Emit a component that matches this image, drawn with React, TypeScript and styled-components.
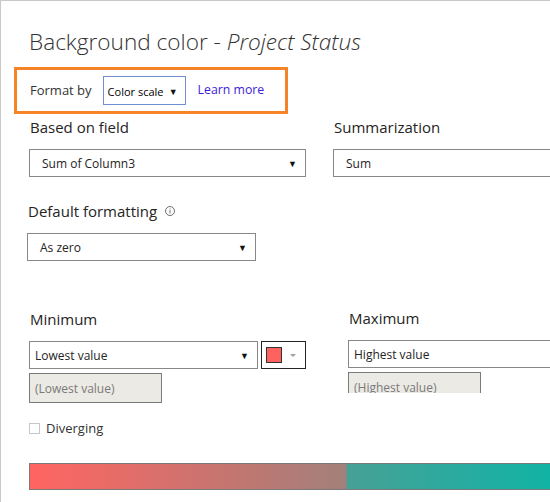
import React from 'react';
import styled, { createGlobalStyle } from 'styled-components';

const GlobalStyle = createGlobalStyle`
  body {
    margin: 0;
    background: #ffffff;
    font-family: "Open Sans", "Noto Sans", sans-serif;
  }
`;

type SelectProps = {
  $width: number;
  $tight?: boolean;
};

function App() {
  return (
    <>
      <GlobalStyle />
      <Page>
        <Title>
          Background color - <em>Project Status</em>
        </Title>
        <FormatBox>
          <FormatLabel>Format by</FormatLabel>
          <SmallSelect>
            <span>Color scale</span>
            <Arrow>▼</Arrow>
          </SmallSelect>
          <LearnLink href="#">Learn more</LearnLink>
        </FormatBox>

        <FieldRow>
          <Field>
            <Label>Based on field</Label>
            <Select $width={277}>
              <span>Sum of Column3</span>
              <Arrow>▼</Arrow>
            </Select>
          </Field>
          <Field>
            <Label>Summarization</Label>
            <Select $width={300}>
              <span>Sum</span>
            </Select>
          </Field>
        </FieldRow>

        <DefaultField>
          <Label>
            Default formatting
            <InfoIcon viewBox="0 0 10 10">
              <circle cx="5" cy="5" r="4.5" fill="none" stroke="#605e5c" strokeWidth="0.9" />
              <rect x="4.55" y="4.2" width="0.9" height="3.3" fill="#605e5c" />
              <rect x="4.55" y="2.5" width="0.9" height="0.9" fill="#605e5c" />
            </InfoIcon>
          </Label>
          <Select $width={229}>
            <span>As zero</span>
            <Arrow>▼</Arrow>
          </Select>
        </DefaultField>

        <RangeRow>
          <Field>
            <Label>Minimum</Label>
            <PickerRow>
              <Select $width={229} $tight>
                <span>Lowest value</span>
                <Arrow>▼</Arrow>
              </Select>
              <ColorButton>
                <Swatch />
                <SmallCaret />
              </ColorButton>
            </PickerRow>
            <ValueBox>(Lowest value)</ValueBox>
          </Field>
          <ClippedField>
            <Label>Maximum</Label>
            <Select $width={220} $tight>
              <span>Highest value</span>
            </Select>
            <ValueBox>(Highest value)</ValueBox>
          </ClippedField>
        </RangeRow>

        <CheckRow>
          <CheckBox />
          <span>Diverging</span>
        </CheckRow>

        <ScaleBar />
      </Page>
    </>
  );
}

export default App;

const Page = styled.div`
  width: 550px;
  height: 502px;
  box-sizing: border-box;
  border-top: 1px solid #c8c8c8;
  border-left: 1px solid #c8c8c8;
  padding: 25px 0 0 28px;
  overflow: hidden;
  color: #252423;
`;
const Title = styled.h1`
  margin: 0;
  font-size: 22.6px;
  line-height: 32px;
  font-weight: 300;
  color: #333333;
  white-space: nowrap;
  > em {
    font-style: italic;
  }
`;
const FormatBox = styled.div`
  margin: 9px 0 0 -15px;
  width: 274px;
  height: 47px;
  box-sizing: border-box;
  border: 3px solid #f68326;
  display: flex;
  align-items: center;
  padding-left: 13px;
`;
const FormatLabel = styled.span`
  font-size: 13px;
  color: #333333;
  margin-bottom: 2px;
`;
const SmallSelect = styled.div`
  margin-left: 11px;
  width: 83px;
  height: 29px;
  box-sizing: border-box;
  border: 1px solid #6f8fd0;
  display: flex;
  align-items: center;
  justify-content: space-between;
  padding: 2px 7px 0 4px;
  font-size: 11px;
  color: #000000;
  flex-shrink: 0;
`;
const LearnLink = styled.a`
  margin-left: 12px;
  margin-bottom: 2px;
  font-size: 12.3px;
  color: #3b22d9;
  text-decoration: none;
`;
const Arrow = styled.span`
  font-size: 9px;
  color: #111111;
`;
const FieldRow = styled.div`
  margin-top: 3px;
  display: flex;
  gap: 27px;
`;
const Field = styled.div`
  display: flex;
  flex-direction: column;
  flex-shrink: 0;
`;
const Label = styled.div`
  font-size: 15px;
  line-height: 20px;
  margin-left: 1px;
  margin-bottom: 12px;
  display: flex;
  align-items: center;
  white-space: nowrap;
`;
const Select = styled.div<SelectProps>`
  width: ${(p) => p.$width}px;
  height: 28px;
  box-sizing: border-box;
  border: 1px solid #8a8886;
  display: flex;
  align-items: center;
  justify-content: space-between;
  padding: 0 8px 0 ${(p) => (p.$tight ? 5 : 12)}px;
  font-size: 12px;
  color: #252423;
  flex-shrink: 0;
`;
const DefaultField = styled(Field)`
  margin-top: 24px;
  margin-left: -2px;
`;
const InfoIcon = styled.svg`
  width: 10px;
  height: 10px;
  margin-left: 8px;
  margin-top: -1px;
`;
const RangeRow = styled.div`
  margin-top: 48px;
  display: flex;
  gap: 42px;
`;
const PickerRow = styled.div`
  display: flex;
  gap: 3px;
`;
const ColorButton = styled.div`
  width: 45px;
  height: 28px;
  box-sizing: border-box;
  border: 1px solid #252423;
  display: flex;
  align-items: center;
  padding-left: 4px;
  gap: 8px;
`;
const Swatch = styled.div`
  width: 16px;
  height: 16px;
  box-sizing: border-box;
  border: 1px solid #333333;
  background: #fd625e;
`;
const SmallCaret = styled.div`
  width: 0;
  height: 0;
  border-left: 3px solid transparent;
  border-right: 3px solid transparent;
  border-top: 3px solid #a0a0a0;
`;
const ValueBox = styled.div`
  margin-top: 4px;
  width: 133px;
  height: 30px;
  flex-shrink: 0;
  box-sizing: border-box;
  border: 1px solid #7a7a7a;
  background: #ebeae4;
  display: flex;
  align-items: center;
  padding-left: 5px;
  font-size: 12px;
  color: #7a7a7a;
`;
const ClippedField = styled(Field)`
  height: 85px;
  overflow: hidden;
  margin-top: -1px;
`;
const CheckRow = styled.div`
  margin-top: 20px;
  display: flex;
  align-items: center;
  gap: 6px;
  font-size: 13px;
  line-height: 11px;
  color: #333333;
`;
const CheckBox = styled.div`
  width: 11px;
  height: 11px;
  box-sizing: border-box;
  border: 1px solid #c6c6c6;
  background: #ffffff;
`;
const ScaleBar = styled.div`
  margin-top: 29px;
  width: 560px;
  height: 27px;
  box-sizing: border-box;
  border: 1px solid #7a7a7a;
  background: linear-gradient(
    to right,
    #ff6461 0px,
    #a2807a 316px,
    #47a096 317px,
    #11b3a5 520px
  );
`;
